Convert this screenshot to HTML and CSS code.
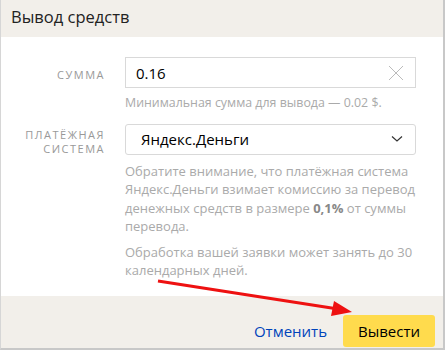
FILE: index.html
```html
<!DOCTYPE html>
<html lang="ru">
<head>
    <meta charset="UTF-8">
    <title>Вывод средств</title>
    <link rel="stylesheet" href="styles.css">
</head>
<body>
    <div class="dialog">
        <div class="dialog-header">Вывод средств</div>

        <div class="dialog-body">
            <div class="row">
                <label class="row-label" for="amount">Сумма</label>
                <div class="row-field">
                    <div class="input">
                        <input id="amount" type="text" value="0.16">
                        <svg class="clear" width="16" height="16" viewBox="0 0 16 16">
                            <path d="M1 1L15 15M15 1L1 15" stroke="#bbb" stroke-width="1" fill="none"/>
                        </svg>
                    </div>
                    <p class="hint">Минимальная сумма для вывода — 0.02 $.</p>
                </div>
            </div>

            <div class="row">
                <label class="row-label">Платёжная<br>система</label>
                <div class="row-field">
                    <div class="select">
                        <span>Яндекс.Деньги</span>
                        <svg width="12" height="8" viewBox="0 0 12 8">
                            <path d="M1 1.5L6 6L11 1.5" stroke="#333" stroke-width="1.2" fill="none"/>
                        </svg>
                    </div>
                    <p class="note">Обратите внимание, что платёжная система Яндекс.Деньги взимает комиссию за перевод денежных средств в размере <b>0,1%</b> от суммы перевода.</p>
                    <p class="note">Обработка вашей заявки может занять до 30 календарных дней.</p>
                </div>
            </div>
        </div>

        <div class="dialog-footer">
            <a class="link" href="#">Отменить</a>
            <button class="btn-yellow">Вывести</button>
        </div>

        <svg class="arrow" width="445" height="350" viewBox="0 0 445 350">
            <line x1="158" y1="281" x2="338" y2="309" stroke="#ee1111" stroke-width="3"/>
            <polygon points="352,312 334,301 331,316" fill="#ee1111"/>
        </svg>
    </div>
</body>
</html>
```

FILE: styles.css
```css
body {
    margin: 0;
    font-family: "Open Sans", "Noto Sans", Arial, sans-serif;
    background: #fff;
}
.dialog {
    position: relative;
    width: 445px;
    height: 350px;
    box-sizing: border-box;
    border-left: 1px solid #d6d6d6;
    border-right: 2px solid #c8c8c8;
    border-bottom: 2px solid #c8c8c8;
    display: flex;
    flex-direction: column;
    overflow: hidden;
}
.dialog-header {
    height: 37px;
    background-color: #f2efea;
    padding-left: 10px;
    font-size: 16.5px;
    line-height: 34px;
    color: #222;
}
.dialog-body {
    flex: 1;
    padding-top: 20px;
}
.row {
    display: flex;
    gap: 20px;
    margin-bottom: 11px;
}
.row-label {
    width: 104px;
    text-align: right;
    font-size: 11px;
    letter-spacing: 1.5px;
    text-transform: uppercase;
    color: #999;
    line-height: 14px;
    padding-top: 11px;
}
.row:nth-child(2) .row-label {
    padding-top: 4px;
}
.row-field {
    width: 291px;
}
.input, .select {
    box-sizing: border-box;
    height: 31px;
    border: 1px solid #d9d9d9;
    display: flex;
    align-items: center;
}
.select {
    border-radius: 3px;
    padding: 0 12px 0 15px;
    justify-content: space-between;
    font-size: 15px;
    color: #000;
}
.input input {
    flex: 1;
    border: none;
    outline: none;
    font-family: inherit;
    font-size: 15px;
    padding: 0 0 0 10px;
    color: #000;
    background: transparent;
}
.clear {
    margin-right: 11px;
}
.hint, .note {
    margin: 0;
    font-size: 13px;
    color: #aaa;
    line-height: 18.5px;
}
.hint {
    margin-top: 6px;
    font-size: 12.4px;
}
.note {
    margin-top: 7px;
}
.note b {
    color: #888;
}
.dialog-footer {
    height: 52px;
    background-color: #f2efea;
    display: flex;
    justify-content: flex-end;
    align-items: flex-end;
    gap: 16px;
    padding: 0 8px 1px 0;
    box-sizing: border-box;
}
.link {
    color: #0044bb;
    text-decoration: none;
    font-size: 15px;
    line-height: 32px;
}
.btn-yellow {
    width: 92px;
    height: 32px;
    border: none;
    border-radius: 3px;
    background-color: #ffdb4d;
    font-family: inherit;
    font-size: 15px;
    color: #000;
}
.arrow {
    position: absolute;
    left: -1px;
    top: 0;
    pointer-events: none;
}
```
